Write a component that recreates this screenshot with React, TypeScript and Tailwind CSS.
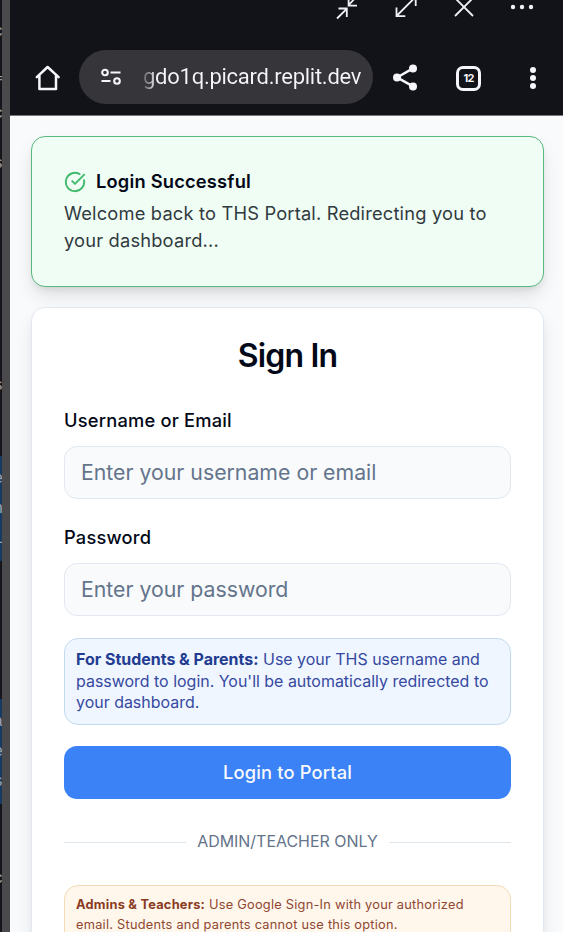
import React from "react";

const inter = "font-['Inter','Liberation_Sans',sans-serif]";

// Code editor that shows through at the far left edge, behind the window frame.
function EdgeChar({ children }: { children: string }) {
  return <span className="-ml-[7px] block h-[30px] shrink-0 text-[17px] leading-[30px] text-[#9aa0aa]">{children}</span>;
}

function EditorEdge() {
  return (
    <div className="flex w-[10px] shrink-0 bg-[#4a494b]">
      <div className="flex h-[932px] w-[2px] flex-col overflow-hidden bg-[#15151b] font-['Liberation_Mono',monospace]">
        <div className="flex h-[456px] shrink-0 flex-col pt-[17px]">
          <EdgeChar>c</EdgeChar>
          <div className="h-[22px]" />
          <EdgeChar>f</EdgeChar>
          <EdgeChar>c</EdgeChar>
          <div className="h-[20px]" />
          <EdgeChar>s</EdgeChar>
          <div className="h-[192px]" />
          <EdgeChar>s</EdgeChar>
        </div>
        <div className="h-[105px] shrink-0 bg-[#173a63] pt-[8px]">
          <EdgeChar>e</EdgeChar>
          <EdgeChar>n</EdgeChar>
          <EdgeChar>l</EdgeChar>
        </div>
        <div className="h-[138px] shrink-0" />
        <div className="h-[105px] shrink-0 bg-[#173a63] pt-[8px]">
          <EdgeChar>a</EdgeChar>
          <EdgeChar>e</EdgeChar>
          <EdgeChar>s</EdgeChar>
        </div>
        <div className="pt-[60px]">
          <EdgeChar>c</EdgeChar>
        </div>
      </div>
    </div>
  );
}

function WindowControls() {
  return (
    <svg className="block h-[22px] w-full" viewBox="10 0 553 22" fill="none" stroke="#f1f1f5" strokeWidth="1.8">
      <path d="M337 18.5 346.7 8.8M338.5 8.5H346.8V17M357 -4 348.6 5.2M348.6 -3V5.7H357" />
      <path d="M396.5 16 415.5 -3M396.5 7.5V16.2H405.3M407 -3H415.7V6" />
      <path d="M455 -2 473 16M473 -2 455 16" />
      <g fill="#f1f1f5" stroke="none">
        <circle cx="513" cy="7" r="2.2" />
        <circle cx="522" cy="7" r="2.2" />
        <circle cx="531" cy="7" r="2.2" />
      </g>
    </svg>
  );
}

function AddressBar() {
  return (
    <div className="flex h-[54px] items-center text-[#f5f5fa]">
      <svg className="ml-[24px] h-[28px] w-[28px] shrink-0" viewBox="0 0 28 28" fill="none" stroke="currentColor" strokeWidth="2.5" strokeLinejoin="round" strokeLinecap="round">
        <path d="M2.8 14.2 13.6 4 24.6 14.2M5.4 12.5V26.1H22V12.5" />
      </svg>
      <div className="ml-[17px] flex h-[54px] w-[294px] shrink-0 items-center rounded-full bg-[#35353a]">
        <svg className="ml-[21px] h-[20px] w-[22px] shrink-0" viewBox="0 0 22 20" fill="none" stroke="currentColor" strokeWidth="2.1">
          <circle cx="5" cy="5.5" r="2.8" />
          <path d="M10.5 5.5H20.5M1.5 14H10.5" />
          <circle cx="17" cy="14" r="2.8" />
        </svg>
        <div className="ml-[21px] w-[219px] overflow-hidden whitespace-nowrap bg-linear-to-r from-[#5c5c61] from-0% via-[#f5f5fa] via-6% to-[#f5f5fa] bg-clip-text font-['Roboto','Liberation_Sans',sans-serif] text-[22px] leading-8 tracking-[-0.26px] text-transparent">
          gdo1q.picard.replit.dev
        </div>
      </div>
      <svg className="ml-[20px] h-[28px] w-[26px] shrink-0" viewBox="0 0 26 28" fill="currentColor">
        <path d="M20 5.4 4 14.4 20 23.4" fill="none" stroke="currentColor" strokeWidth="2.4" />
        <circle cx="4" cy="14.4" r="4" />
        <circle cx="20" cy="5.6" r="4" />
        <circle cx="20" cy="23.6" r="4" />
      </svg>
      <div className={`ml-[37px] mt-[2px] flex h-[25px] w-[25px] shrink-0 items-center justify-center rounded-[7px] border-3 border-current text-[11px] font-bold tracking-[-0.8px] ${inter}`}>
        12
      </div>
      <svg className="ml-[47px] mt-[2px] h-[24px] w-[10px] shrink-0" viewBox="0 0 10 24" fill="currentColor">
        <circle cx="5" cy="4" r="3" />
        <circle cx="5" cy="12" r="3" />
        <circle cx="5" cy="20" r="3" />
      </svg>
    </div>
  );
}

function SuccessAlert() {
  return (
    <section className="h-[151px] rounded-[14px] border border-[#59b780] bg-[#f0fdf4] px-[32px] pt-[31px] shadow-[0_10px_20px_-3px_rgba(0,0,0,0.12),0_4px_8px_-3px_rgba(0,0,0,0.1)]">
      <div className="flex h-[27px] items-center">
        <svg className="mt-px h-[22px] w-[22px]" viewBox="0 0 24 24" fill="none" stroke="#41ba6d" strokeWidth="2.1" strokeLinecap="round" strokeLinejoin="round">
          <path d="M21.801 10A10 10 0 1 1 17 3.335" />
          <path d="m9 11 3 3L22 4" />
        </svg>
        <h2 className="ml-[10px] text-[18.3px] font-semibold tracking-[0.2px] text-[#020817]">Login Successful</h2>
      </div>
      <p className="mt-[5px] whitespace-nowrap text-[18.3px] leading-[27px] tracking-[0.18px] text-[#303a40]">
        Welcome back to THS Portal. Redirecting you to
        <br />
        your dashboard...
      </p>
    </section>
  );
}

function Field({ label, placeholder, type }: { label: string; placeholder: string; type: string }) {
  return (
    <label className="block">
      <span className="block h-[38px] text-[18.3px] font-medium leading-[24px] tracking-[0.2px] text-[#020817]">{label}</span>
      <input
        type={type}
        placeholder={placeholder}
        className="block h-[53px] w-full rounded-[13px] border border-[#e2e8f0] bg-[#f8fafc] px-4 pb-[2px] text-[21.28px] outline-none placeholder:text-[#64748b]"
      />
    </label>
  );
}

function SignInCard() {
  return (
    <main className="mt-[20px] h-[680px] rounded-[14px] border border-[#e2e8f0] bg-white px-[32px] shadow-[0_10px_20px_-3px_rgba(0,0,0,0.1),0_4px_8px_-3px_rgba(0,0,0,0.08)]">
      <h1 className="pt-[28px] text-center text-[32px] font-semibold leading-[40px] tracking-[-0.8px] text-[#020817]">Sign In</h1>
      <form className="pt-[32px]">
        <Field label="Username or Email" placeholder="Enter your username or email" type="text" />
        <div className="h-[26px]" />
        <Field label="Password" placeholder="Enter your password" type="password" />
        <div className="mt-[22px] h-[87px] whitespace-nowrap rounded-[14px] border border-[#c1daf0] bg-[#eff6ff] px-[11px] pt-[10px] text-[15.96px] leading-[21.5px] text-[#36499f]">
          <strong className="font-bold text-[#223c92]">For Students &amp; Parents:</strong> Use your THS username and
          <br />
          password to login. You'll be automatically redirected to
          <br />
          your dashboard.
        </div>
        <button type="button" className="mt-[21px] block h-[53px] w-full rounded-[13px] bg-[#3b82f6] text-[18.3px] font-medium tracking-[0.18px] text-[#f8fafc]">
          Login to Portal
        </button>
      </form>
      <div className="mt-[32px] flex h-[22px] items-center gap-[11px] text-[15.96px] text-[#64748b]">
        <span className="h-px flex-1 bg-[#dfe6eb]" />
        <span className="whitespace-nowrap pb-px leading-[21px]">ADMIN/TEACHER ONLY</span>
        <span className="h-px flex-1 bg-[#dfe6eb]" />
      </div>
      <div className="mt-[32px] h-[80px] whitespace-nowrap rounded-[14px] border border-[#f3dbb5] bg-[#fff6ec] px-[11px] pt-[9px] text-[12.8px] leading-[20px] tracking-[0.24px] text-[#8f4730]">
        <strong className="font-bold text-[#8a3b22]">Admins &amp; Teachers:</strong> Use Google Sign-In with your authorized
        <br />
        email. Students and parents cannot use this option.
      </div>
    </main>
  );
}

export default function App() {
  return (
    <div className={`flex h-[932px] w-[563px] overflow-hidden ${inter}`}>
      <EditorEdge />
      <div className="h-[932px] min-w-0 flex-1 overflow-hidden bg-[#f8fafc]">
        <header className="h-[116px] border-b border-[#77777c] bg-[#121319]">
          <WindowControls />
          <div className="pt-[28px]">
            <AddressBar />
          </div>
        </header>
        <div className="pl-[21px] pr-[19px] pt-[20px]">
          <SuccessAlert />
          <SignInCard />
        </div>
      </div>
    </div>
  );
}
